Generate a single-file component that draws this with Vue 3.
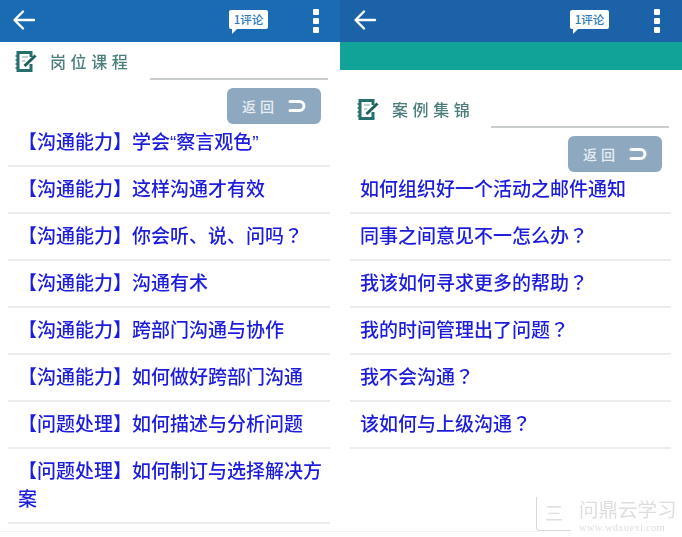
<script setup>
const split = (t) => t.split(/(？)/).filter(Boolean)
const panels = [
  {
    id: 'left', title: '岗位课程', band: false,
    items: ['【沟通能力】学会“察言观色”','【沟通能力】这样沟通才有效','【沟通能力】你会听、说、问吗？','【沟通能力】沟通有术','【沟通能力】跨部门沟通与协作','【沟通能力】如何做好跨部门沟通','【问题处理】如何描述与分析问题','【问题处理】如何制订与选择解决方案']
  },
  {
    id: 'right', title: '案例集锦', band: true,
    items: ['如何组织好一个活动之邮件通知','同事之间意见不一怎么办？','我该如何寻求更多的帮助？','我的时间管理出了问题？','我不会沟通？','该如何与上级沟通？']
  }
]
</script>

<template>
  <div class="page">
    <section v-for="p in panels" :key="p.id" class="panel" :class="p.id">
      <header class="bar">
        <svg class="back" width="24" height="22" viewBox="0 0 24 22" fill="none" stroke="#fff" stroke-width="2.4" stroke-linecap="round" stroke-linejoin="round"><path d="M22 11H3M11 2.500L2.500 11l8.500 8.500"/></svg>
        <div class="bubble"><span>1评论</span><i></i></div>
        <div class="dots"><b></b><b></b><b></b></div>
      </header>
      <div v-if="p.band" class="band"></div>
      <div class="heading">
        <svg class="note" width="24" height="24" viewBox="0 0 24 24" fill="none">
          <path d="M17 8V3.500H4V21.500H17V15" stroke="#25706c" stroke-width="3"/>
          <path d="M1.500 7h2M1.500 11h2M1.500 15h2M1.500 19h2" stroke="#25706c" stroke-width="1.600"/>
          <path d="M8 8h6M8 12h3" stroke="#a9c6c4" stroke-width="1.500"/>
          <path d="M10.500 17l11-10.500" stroke="#1f5f5c" stroke-width="3"/>
        </svg>
        <span class="title">{{ p.title }}</span>
        <div class="rule"></div>
      </div>
      <div class="actions">
        <button class="ret">
          <span>返回</span>
          <svg width="18" height="14" viewBox="0 0 18 14" fill="none" stroke="#fff" stroke-width="3" stroke-linecap="round"><path d="M2 2.500h9.500a4.500 4.500 0 0 1 0 9H2"/></svg>
        </button>
      </div>
      <ul class="list">
        <li v-for="t in p.items" :key="t"><template v-for="(s, i) in split(t)" :key="i"><span v-if="s === '？'" class="q">{{ s }}</span><template v-else>{{ s }}</template></template></li>
      </ul>
    </section>
    <div class="baseline"></div>
    <div class="mark">
      <div class="mark-box"><span>三</span></div>
      <div class="mark-text">
        <div class="mark-cn">问鼎云学习</div>
        <div class="mark-en">www.wdxuexi.com</div>
      </div>
    </div>
  </div>
</template>

<style>
html, body { margin: 0; background: #fff; }
</style>

<style scoped>
.page {
  position: relative;
  width: 682px;
  height: 537px;
  display: grid;
  grid-template-columns: 340px 342px;
  overflow: hidden;
  background: #fff;
  font-family: "Noto Sans CJK SC", "Liberation Sans", sans-serif;
}
.panel { min-width: 0; filter: blur(0.5px); }
.bar {
  height: 42px;
  background: #1a6bb1;
  display: flex;
  align-items: center;
  padding: 0 21px 0 12px;
  box-sizing: border-box;
}
.right .bar { background: #1b62a8; padding-left: 13px; padding-right: 22px; }
.back { flex: none; margin-bottom: 2px; }
.bubble {
  position: relative;
  margin-left: auto;
  width: 39px;
  height: 19px;
  background: #fff;
  border-radius: 2px;
  color: #2a78b8;
  font-size: 11.500px;
  font-weight: 500;
  line-height: 19px;
  text-align: center;
  margin-right: 45px;
  margin-bottom: 4px;
}
.bubble i {
  position: absolute;
  left: 3px;
  bottom: -5px;
  width: 0;
  height: 0;
  border-top: 6px solid #fff;
  border-right: 6px solid transparent;
}
.dots { display: flex; flex-direction: column; gap: 3px; }
.dots b { width: 6px; height: 6px; border-radius: 1px; background: #fff; }
.band { height: 28px; background: #12a398; }
.heading {
  position: relative;
  height: 37px;
  display: flex;
  align-items: center;
  padding-left: 14px;
  box-sizing: border-box;
}
.right .heading { height: 57px; padding-top: 20px; padding-left: 16px; }
.note { flex: none; }
.title {
  margin-left: 12px;
  color: #4b7d7b;
  font-size: 16px;
  letter-spacing: 4.600px;
  font-weight: 500;
}
.rule {
  position: absolute;
  left: 150px;
  right: 12px;
  bottom: -1px;
  height: 2px;
  background: #c9cdce;
}
.right .rule { left: 151px; right: 13px; }
.actions {
  display: flex;
  justify-content: flex-end;
  padding: 9px 19px 0 0;
}
.right .actions { padding-right: 20px; }
.ret {
  width: 94px;
  height: 36px;
  border: 0;
  padding: 0 0 0 15px;
  border-radius: 6px;
  background: #8ea8bf;
  color: #e6edf3;
  font: inherit;
  font-size: 14px;
  font-weight: 500;
  letter-spacing: 4px;
  display: flex;
  align-items: center;
  gap: 10px;
}
.list { list-style: none; margin: 0; padding: 0 10px 0 8px; }
.left .list { margin-top: -4px; }
.right .list { margin-top: -5px; padding-left: 10px; padding-right: 11px; }
.list li {
  font-family: "Liberation Sans", "Noto Sans CJK SC", sans-serif;
  font-size: 19px;
  font-weight: 500;
  line-height: 28px;
  color: #1c1cdc;
  padding: 9px 0 8px 10px;
  border-bottom: 2px solid #ececec;
  box-sizing: border-box;
}
.q { font-family: "Noto Sans CJK TC", sans-serif; line-height: 0; }
.baseline {
  position: absolute;
  left: 0;
  width: 540px;
  top: 531px;
  height: 1px;
  background: #f2f2f2;
}
.mark {
  position: absolute;
  left: 536px;
  top: 497px;
  width: 146px;
  display: flex;
  color: #dcdee0;
}
.mark-box {
  width: 34px;
  height: 33px;
  border-left: 1px solid #d6d8da;
  border-bottom: 1px solid #d6d8da;
  border-radius: 0 0 0 4px;
  font-size: 18px;
  line-height: 30px;
  text-align: center;
}
.mark-cn { font-size: 19.500px; line-height: 24px; margin-left: 8px; }
.mark-en { font-size: 10.500px; line-height: 14px; margin-left: 8px; font-family: "Liberation Serif", serif; letter-spacing: 0.300px; }
</style>
